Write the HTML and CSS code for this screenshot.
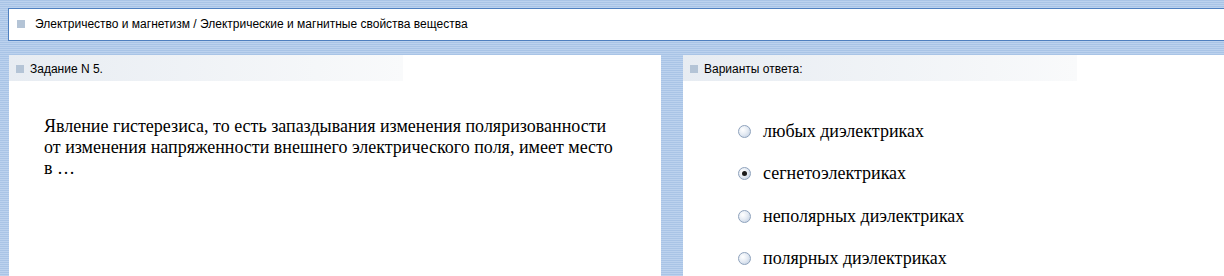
FILE: index.html
```html
<!DOCTYPE html>
<html lang="ru">
  <head>
    <meta charset="UTF-8" />
    <title>Задание N 5</title>
    <link rel="stylesheet" href="styles.css">
  </head>
  <body>
    <div class="topic">
      <span class="marker"></span>
      <span>Электричество и магнетизм / Электрические и магнитные свойства вещества</span>
    </div>

    <div class="panels">
      <section class="panel task">
        <div class="panel-title"><span class="marker"></span>Задание N 5.</div>
        <p class="question">
          Явление гистерезиса, то есть запаздывания изменения поляризованности
          от изменения напряженности внешнего электрического поля, имеет место
          в …
        </p>
      </section>

      <section class="panel answers">
        <div class="panel-title"><span class="marker"></span>Варианты ответа:</div>
        <ul class="options">
          <li><span class="radio"></span>любых диэлектриках</li>
          <li><span class="radio checked"></span>сегнетоэлектриках</li>
          <li><span class="radio"></span>неполярных диэлектриках</li>
          <li><span class="radio"></span>полярных диэлектриках</li>
        </ul>
      </section>
    </div>
  </body>
</html>
```

FILE: styles.css
```css
:root {
  --stripe-a: #a9c4e6;
  --stripe-b: #bcd2ee;
  --border-blue: #4f80c0;
  --marker: #b4c4d6;
  --text: #000;
  --serif: "Liberation Serif", "Times New Roman", "DejaVu Serif", serif;
}

* {
  margin: 0;
  padding: 0;
  box-sizing: border-box;
}

body {
  font-family: "Liberation Sans", Arial, sans-serif;
  color: var(--text);
  background: repeating-linear-gradient(
    to bottom,
    var(--stripe-a) 0,
    var(--stripe-a) 1px,
    var(--stripe-b) 1px,
    var(--stripe-b) 2px
  );
  height: 276px;
  overflow: hidden;
}

.marker {
  display: inline-block;
  width: 8px;
  height: 8px;
  background: var(--marker);
  flex-shrink: 0;
}

.topic {
  display: flex;
  align-items: center;
  gap: 10px;
  margin: 8px 0 0 8px;
  height: 33px;
  padding: 0 0 1px 8px;
  background: #fff;
  border: 1px solid var(--border-blue);
  border-right: none;
  font-size: 12px;
}

.panels {
  display: flex;
  gap: 22px;
  height: 221px;
  margin: 14px 0 0 9px;
}

.panel {
  background: #fff;
  overflow: hidden;
}

.task {
  width: 652px;
}

.answers {
  flex: 1;
}

.panel-title {
  display: flex;
  align-items: center;
  gap: 6px;
  width: 394px;
  height: 26px;
  padding: 1px 0 0 7px;
  font-size: 12px;
  background: linear-gradient(to right, #e7ecf2, #f9fafb);
}

.question {
  width: 581px;
  margin-left: 35px;
  padding-top: 35px;
  font-family: var(--serif);
  font-size: 18px;
  line-height: 21px;
}

.options {
  list-style: none;
  padding: 29px 0 0 55px;
}

.options li {
  display: flex;
  align-items: center;
  gap: 12px;
  height: 42.5px;
  font-family: var(--serif);
  font-size: 18px;
}

.radio {
  position: relative;
  width: 13px;
  height: 13px;
  border-radius: 50%;
  border: 1px solid #8ea2bc;
  background: radial-gradient(circle at 35% 35%, #ffffff 0, #e6ecf4 45%, #bccbdf 100%);
}

.radio.checked::after {
  content: "";
  position: absolute;
  left: 3px;
  top: 3px;
  width: 5px;
  height: 5px;
  border-radius: 50%;
  background: #1a1a1a;
}
```
